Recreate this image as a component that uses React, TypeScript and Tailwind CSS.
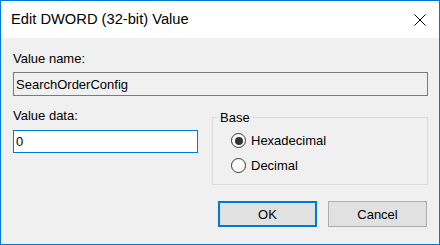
import React from "react";

const font = { fontFamily: '"Liberation Sans", Arial, sans-serif' };

function Radio({ label, checked }: { label: string; checked?: boolean }) {
  return (
    <label className="flex h-[15px] items-center gap-[5px]">
      <span className="flex h-[15px] w-[15px] items-center justify-center rounded-full border border-[#333333] bg-white">
        {checked && <span className="h-[8px] w-[8px] rounded-full bg-[#333333]" />}
      </span>
      <span className="text-[13px] leading-[15px] text-black">{label}</span>
    </label>
  );
}

export default function App() {
  return (
    <div
      className="flex h-[245px] w-[440px] flex-col border border-[#0078d7] bg-[#f0f0f0] text-black"
      style={font}
    >
      <div className="flex h-[37px] shrink-0 items-center justify-between bg-white pl-[10px] pr-[13px]">
        <span className="text-[14.7px] leading-[17px]">Edit DWORD (32-bit) Value</span>
        <svg width="12" height="12" viewBox="0 0 12 12" className="mt-[1px]">
          <path d="M0.5 0.5 L11.5 11.5 M11.5 0.5 L0.5 11.5" stroke="#000" strokeWidth="1" />
        </svg>
      </div>

      <div className="flex flex-col pl-3 pr-[11px] pt-[13px] text-[13px] leading-[15px]">
        <div>Value name:</div>
        <div className="mt-[6px] flex h-[24px] items-center border border-[#7a7a7a] bg-[#f0f0f0] pl-[2px]">
          SearchOrderConfig
        </div>

        <div className="mt-[12px] flex items-start gap-[14px]">
          <div className="flex w-[185px] flex-col">
            <div>Value data:</div>
            <div className="mt-[7px] flex h-[23px] items-center border border-[#0078d7] bg-white pl-[2px]">
              0
            </div>
          </div>
          <fieldset className="mt-[2px] h-[75px] w-[216px] border border-[#dcdcdc] pt-[8px]">
            <legend className="ml-[5px] px-[2px]">Base</legend>
            <div className="flex flex-col gap-[10px] pl-[18px]">
              <Radio label="Hexadecimal" checked />
              <Radio label="Decimal" />
            </div>
          </fieldset>
        </div>

        <div className="mr-[1px] mt-[16px] flex justify-end gap-[11px]">
          <button className="flex h-[26px] w-[99px] items-center justify-center border-2 border-[#0078d7] bg-[#e1e1e1]">
            OK
          </button>
          <button className="flex h-[26px] w-[99px] items-center justify-center border border-[#adadad] bg-[#e1e1e1]">
            Cancel
          </button>
        </div>
      </div>
    </div>
  );
}
